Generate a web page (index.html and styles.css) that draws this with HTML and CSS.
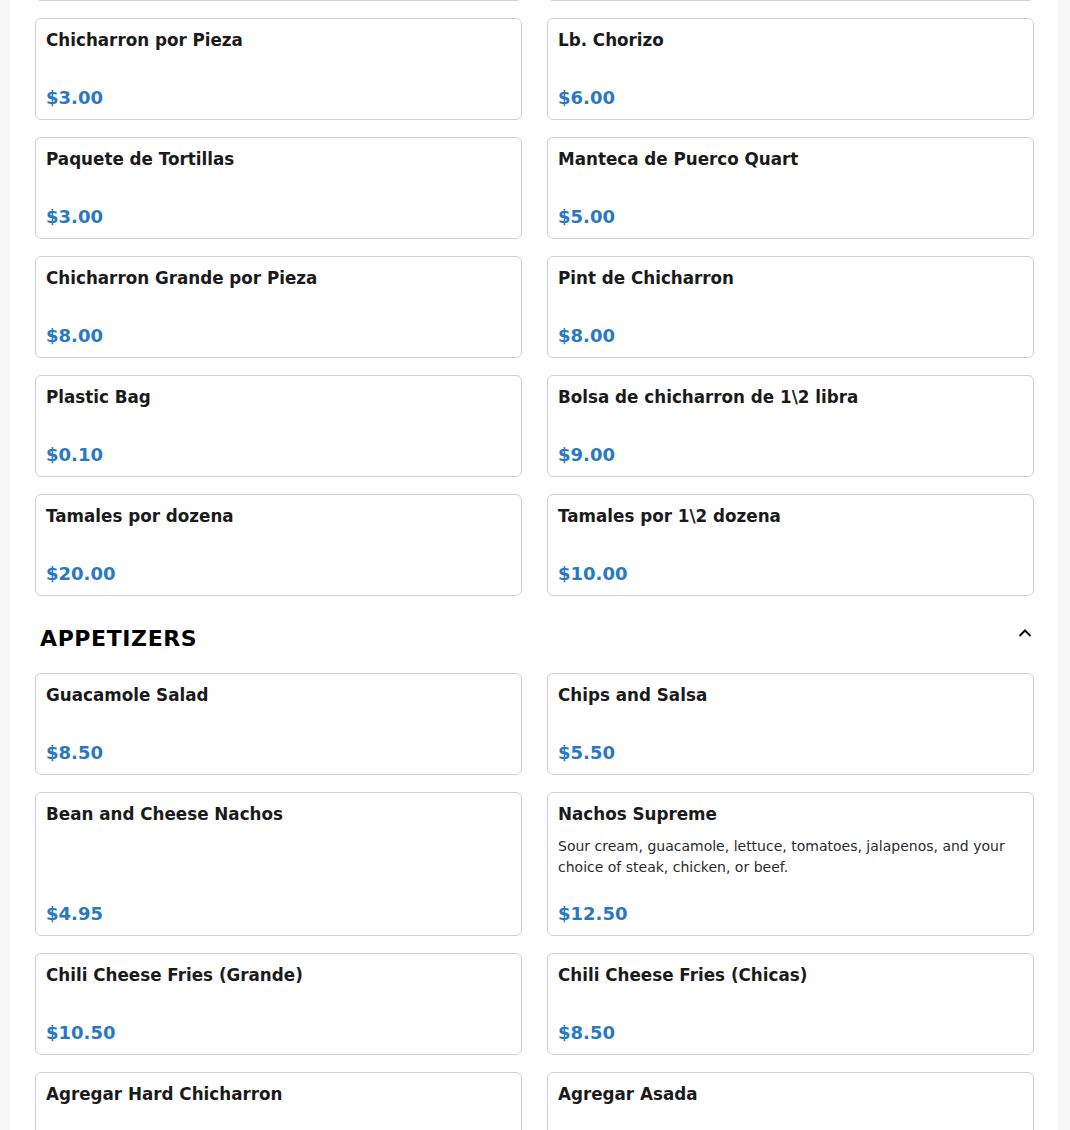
FILE: index.html
```html
<!DOCTYPE html>
<html lang="es">
<head>
<meta charset="utf-8">
<title>Menu</title>
<link rel="stylesheet" href="styles.css">
</head>
<body>
<main class="page">
  <section class="section">
    <div class="grid">
      <div class="card card-hidden"></div>
      <div class="card card-hidden"></div>
      <div class="card"><h3 class="name">Chicharron por Pieza</h3><div class="price">$3.00</div></div>
      <div class="card"><h3 class="name">Lb. Chorizo</h3><div class="price">$6.00</div></div>
      <div class="card"><h3 class="name">Paquete de Tortillas</h3><div class="price">$3.00</div></div>
      <div class="card"><h3 class="name">Manteca de Puerco Quart</h3><div class="price">$5.00</div></div>
      <div class="card"><h3 class="name">Chicharron Grande por Pieza</h3><div class="price">$8.00</div></div>
      <div class="card"><h3 class="name">Pint de Chicharron</h3><div class="price">$8.00</div></div>
      <div class="card"><h3 class="name">Plastic Bag</h3><div class="price">$0.10</div></div>
      <div class="card"><h3 class="name">Bolsa de chicharron de 1\2 libra</h3><div class="price">$9.00</div></div>
      <div class="card"><h3 class="name">Tamales por dozena</h3><div class="price">$20.00</div></div>
      <div class="card"><h3 class="name">Tamales por 1\2 dozena</h3><div class="price">$10.00</div></div>
    </div>
  </section>
  <section class="section">
    <div class="section-head">
      <h2 class="section-title">APPETIZERS</h2>
      <svg class="chevron" width="14" height="10" viewBox="0 0 14 10"><path d="M1.5 8 L7 2.5 L12.5 8" fill="none" stroke="#111" stroke-width="2"/></svg>
    </div>
    <div class="grid">
      <div class="card"><h3 class="name">Guacamole Salad</h3><div class="price">$8.50</div></div>
      <div class="card"><h3 class="name">Chips and Salsa</h3><div class="price">$5.50</div></div>
      <div class="card"><h3 class="name">Bean and Cheese Nachos</h3><p class="desc">&nbsp;<br>&nbsp;</p><div class="price">$4.95</div></div>
      <div class="card"><h3 class="name">Nachos Supreme</h3><p class="desc">Sour cream, guacamole, lettuce, tomatoes, jalapenos, and your choice of steak, chicken, or beef.</p><div class="price">$12.50</div></div>
      <div class="card"><h3 class="name">Chili Cheese Fries (Grande)</h3><div class="price">$10.50</div></div>
      <div class="card"><h3 class="name">Chili Cheese Fries (Chicas)</h3><div class="price">$8.50</div></div>
      <div class="card"><h3 class="name">Agregar Hard Chicharron</h3><div class="price">$2.00</div></div>
      <div class="card"><h3 class="name">Agregar Asada</h3><div class="price">$3.00</div></div>
    </div>
  </section>
</main>
</body>
</html>
```

FILE: styles.css
```css
html, body {
  margin: 0;
  padding: 0;
  background: #f7f7f7;
  font-family: "DejaVu Sans", sans-serif;
  color: #1a1a1a;
}
.page {
  margin: -103px 12px 0 10px;
  background: #fff;
  padding: 0 24px 40px 25px;
}
.grid {
  display: grid;
  grid-template-columns: 1fr 1fr;
  column-gap: 25px;
  row-gap: 17px;
}
.card {
  border: 1px solid #cfcfcf;
  border-radius: 6px;
  padding: 11px 10px 10px;
  display: flex;
  flex-direction: column;
  background: #fff;
}
.card-hidden {
  height: 81px;
}
.name {
  margin: 0 0 12px;
  font-size: 16.75px;
  line-height: 20px;
  font-weight: bold;
  color: #1a1a1a;
}
.desc {
  margin: 0;
  font-size: 14px;
  line-height: 21px;
  color: #2b2b2b;
}
.price {
  margin-top: auto;
  padding-top: 24px;
  font-size: 18px;
  line-height: 23px;
  font-weight: bold;
  color: #2a78c2;
}
.section-head {
  display: flex;
  align-items: center;
  justify-content: space-between;
  padding: 0 2px 0 5px;
  margin: 25px 0 16px;
}
.section-title {
  margin: 0;
  font-size: 22px;
  line-height: 36px;
  font-weight: bold;
  letter-spacing: 0.6px;
  color: #000;
}
.chevron {
  display: block;
  margin-top: -12px;
}
```
